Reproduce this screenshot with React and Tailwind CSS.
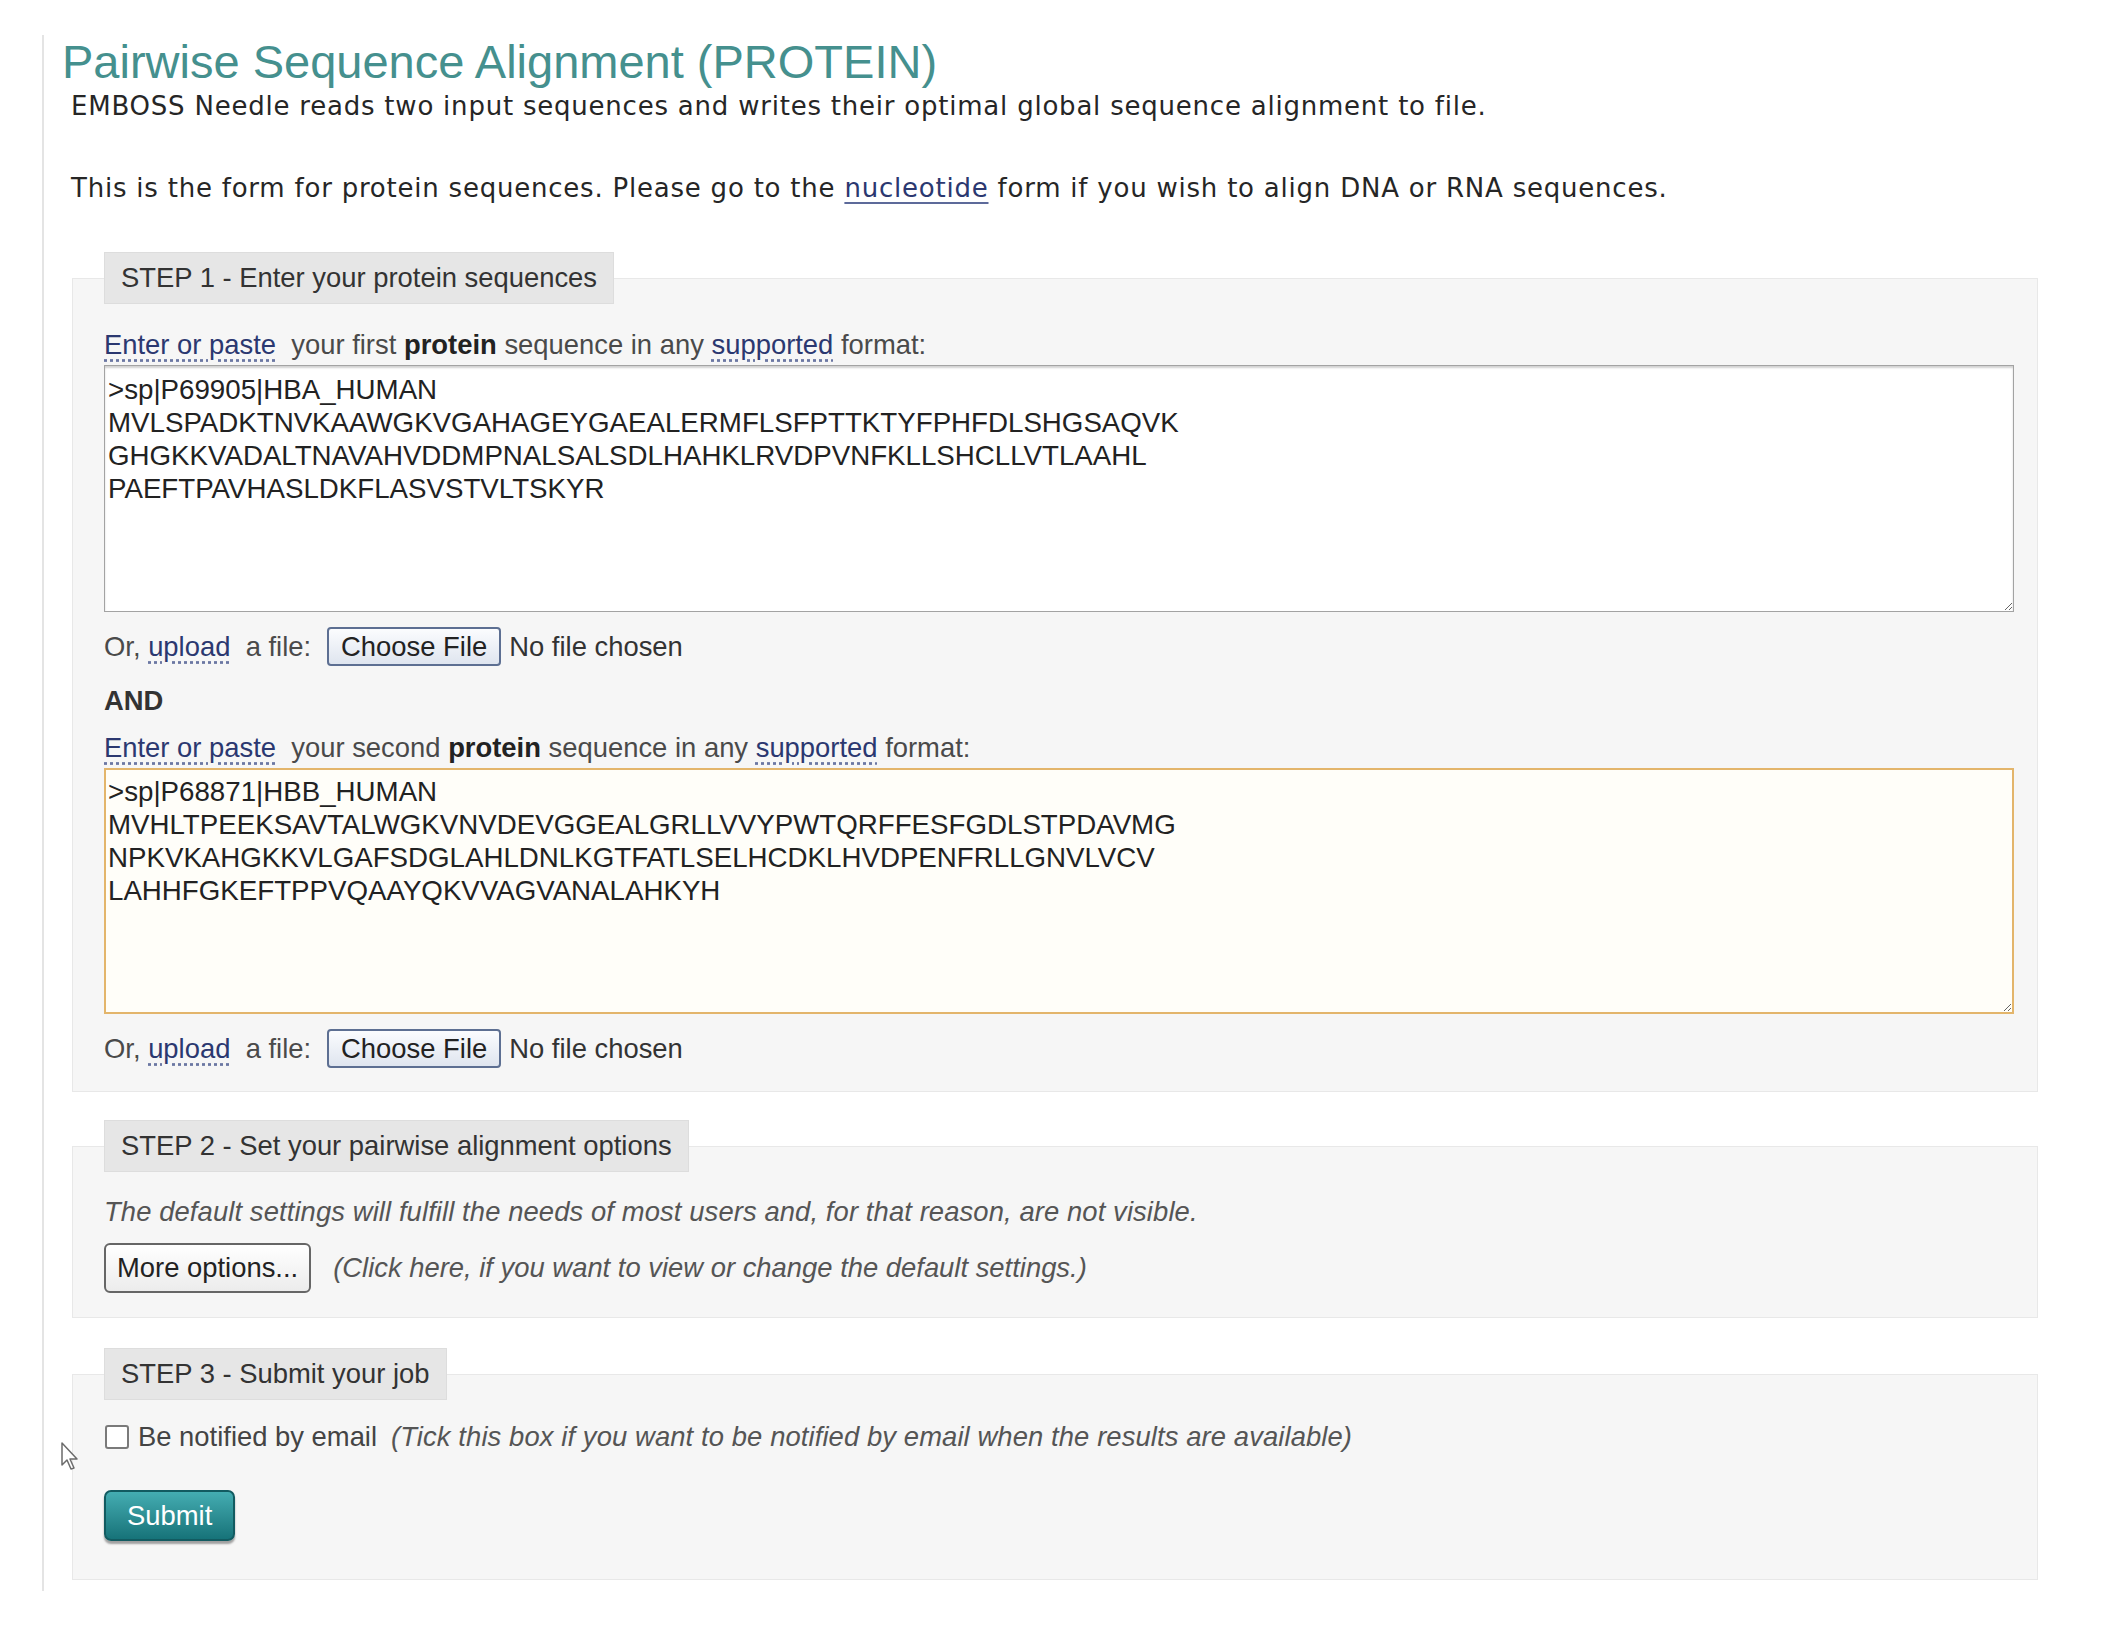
import React from "react";

const seqOne = `>sp|P69905|HBA_HUMAN
MVLSPADKTNVKAAWGKVGAHAGEYGAEALERMFLSFPTTKTYFPHFDLSHGSAQVK
GHGKKVADALTNAVAHVDDMPNALSALSDLHAHKLRVDPVNFKLLSHCLLVTLAAHL
PAEFTPAVHASLDKFLASVSTVLTSKYR`;

const seqTwo = `>sp|P68871|HBB_HUMAN
MVHLTPEEKSAVTALWGKVNVDEVGGEALGRLLVVYPWTQRFFESFGDLSTPDAVMG
NPKVKAHGKKVLGAFSDGLAHLDNLKGTFATLSELHCDKLHVDPENFRLLGNVLVCV
LAHHFGKEFTPPVQAAYQKVVAGVANALAHKYH`;

const DotLink = ({ children }) => (
    <span className="text-[#2b3870] underline decoration-dotted decoration-[#6b77a3] underline-offset-[5px]">
        {children}
    </span>
);

const Step = ({ title, className, children }) => (
    <fieldset
        className={`ml-[28px] w-[1966px] border border-[#e8e8e8] bg-[#f6f6f6] pl-[31px] pr-[23px] ${className}`}
    >
        <legend className="h-[52px] border border-[#dddddd] bg-[#e6e6e6] px-[16px] text-[27.4px] leading-[50px] text-[#333]">
            {title}
        </legend>
        {children}
    </fieldset>
);

const UploadRow = ({ className }) => (
    <div className={`flex h-[39px] items-center text-[27.4px] text-[#4a4a4a] ${className}`}>
        <span>Or,&nbsp;</span>
        <DotLink>upload</DotLink>
        <span>&nbsp;&nbsp;a file:</span>
        <button
            type="button"
            className="ml-[16px] h-[39px] rounded-[4px] border-2 border-[#5d6f92] bg-gradient-to-b from-[#fbfcfe] to-[#dfe5ef] px-[12px] text-[27.4px] text-[#222] leading-none"
        >
            Choose File
        </button>
        <span className="ml-[8px] text-[#333]">No file chosen</span>
    </div>
);

const App = () => {
    return (
        <div className="relative min-h-screen bg-white pt-[44px] font-['Liberation_Sans',Arial,sans-serif]">
            <div className="ml-[42px] border-l-2 border-[#e4e4e4] pb-[11px]">
                <h1 className="-mt-[9px] ml-[18px] text-[47px] leading-[54px] font-normal text-[#45908e]">
                    Pairwise Sequence Alignment (PROTEIN)
                </h1>
                <div className="ml-[27px] font-['DejaVu_Sans',Verdana,sans-serif] text-[26px] leading-[30px] tracking-[0.78px] text-[#262626]">
                    <p className="mt-[2px]">
                        EMBOSS Needle reads two input sequences and writes their optimal global sequence alignment to file.
                    </p>
                    <p className="mt-[52px]">
                        This is the form for protein sequences. Please go to the{" "}
                        <span className="text-[#2b3870] underline decoration-[#5d6a9a] underline-offset-[5px]">
                            nucleotide
                        </span>{" "}
                        form if you wish to align DNA or RNA sequences.
                    </p>
                </div>

                <Step title="STEP 1 - Enter your protein sequences" className="mt-[49px] pb-[23px]">
                    <div className="mt-[24px] text-[27.4px] leading-[33px] text-[#4a4a4a]">
                        <DotLink>Enter or paste</DotLink>&nbsp; your first{" "}
                        <b className="text-[#222]">protein</b> sequence in any{" "}
                        <DotLink>supported</DotLink> format:
                    </div>
                    <textarea
                        readOnly
                        defaultValue={seqOne}
                        className="mt-[4px] block h-[247px] w-full border border-[#a3a3a3] bg-white pl-[3px] pt-[7px] text-[27.7px] leading-[33px] text-[#222] shadow-[inset_0_2px_2px_rgba(0,0,0,0.18)] outline-none"
                    />
                    <UploadRow className="mt-[15px]" />
                    <div className="mt-[18px] text-[27.4px] font-bold leading-[33px] text-[#333]">AND</div>
                    <div className="mt-[14px] text-[27.4px] leading-[33px] text-[#4a4a4a]">
                        <DotLink>Enter or paste</DotLink>&nbsp; your second{" "}
                        <b className="text-[#222]">protein</b> sequence in any{" "}
                        <DotLink>supported</DotLink> format:
                    </div>
                    <textarea
                        readOnly
                        defaultValue={seqTwo}
                        className="mt-[4px] block h-[246px] w-full border-2 border-[#e3b56b] bg-[#fffef9] pl-[2px] pt-[5px] text-[27.7px] leading-[33px] text-[#222] outline-none"
                    />
                    <UploadRow className="mt-[15px]" />
                </Step>

                <Step title="STEP 2 - Set your pairwise alignment options" className="mt-[28px] pb-[24px]">
                    <div className="mt-[23px] text-[27.4px] italic leading-[33px] tracking-[0.1px] text-[#555]">
                        The default settings will fulfill the needs of most users and, for that reason, are not visible.
                    </div>
                    <div className="mt-[15px] flex items-center">
                        <button
                            type="button"
                            className="h-[50px] rounded-[6px] border-2 border-[#666] bg-gradient-to-b from-white to-[#ececec] px-[11px] text-[27.4px] text-[#222] leading-none"
                        >
                            More options...
                        </button>
                        <span className="ml-[22px] text-[27.4px] italic text-[#555]">
                            (Click here, if you want to view or change the default settings.)
                        </span>
                    </div>
                </Step>

                <Step title="STEP 3 - Submit your job" className="mt-[30px] pb-[38px]">
                    <div className="mt-[20px] flex h-[33px] items-center text-[27.4px]">
                        <input
                            type="checkbox"
                            className="ml-px h-[24px] w-[24px] appearance-none rounded-[3px] border-2 border-[#7a7a7a] bg-white"
                        />
                        <span className="ml-[9px] text-[#444]">Be notified by email</span>
                        <span className="ml-[14px] italic tracking-[0.1px] text-[#555]">
                            (Tick this box if you want to be notified by email when the results are available)
                        </span>
                    </div>
                    <button
                        type="submit"
                        className="mt-[37px] block h-[51px] rounded-[7px] border-2 border-[#125b61] bg-gradient-to-b from-[#44adb2] to-[#167379] px-[21px] text-[27.4px] leading-none text-white shadow-[0_3px_2px_rgba(0,0,0,0.35)]"
                    >
                        Submit
                    </button>
                </Step>
            </div>

            <svg
                className="absolute left-[60px] top-[1441px]"
                width="20"
                height="30"
                viewBox="0 0 20 30"
            >
                <path
                    d="M2 2 L2 24 L7 19 L11 28 L14 27 L10 18 L17 18 Z"
                    fill="white"
                    stroke="#6b6b6b"
                    strokeWidth="1.5"
                    strokeLinejoin="round"
                />
            </svg>
        </div>
    );
};

export default App;
